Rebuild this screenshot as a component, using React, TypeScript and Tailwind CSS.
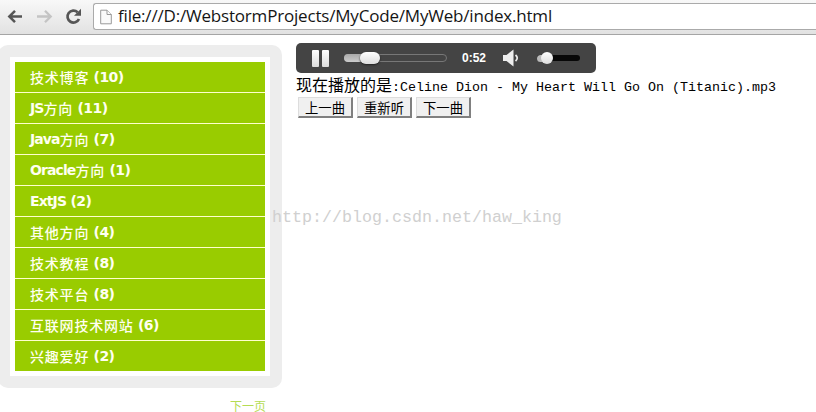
const categories = [
  { cjk: "技术博客", latin: "", count: 10 },
  { cjk: "方向", latin: "JS", count: 11 },
  { cjk: "方向", latin: "Java", count: 7 },
  { cjk: "方向", latin: "Oracle", count: 1 },
  { cjk: "", latin: "ExtJS", count: 2 },
  { cjk: "其他方向", latin: "", count: 4 },
  { cjk: "技术教程", latin: "", count: 8 },
  { cjk: "技术平台", latin: "", count: 8 },
  { cjk: "互联网技术网站", latin: "", count: 6 },
  { cjk: "兴趣爱好", latin: "", count: 2 },
];

function Toolbar() {
  return (
    <header className="flex h-[35px] items-start border-b border-[#a5a5a5] bg-gradient-to-b from-[#f8f8f8] to-[#e2e2e2]">
      <svg className="h-[34px] w-[93px] shrink-0" viewBox="0 0 93 34" fill="none">
        <path d="M22 16.5H10M15 10.8L9.3 16.5L15 22.2" stroke="#555" strokeWidth="2.5" />
        <path d="M37 16.5H50M45 10.8L50.7 16.5L45 22.2" stroke="#c4c4c4" strokeWidth="2.3" />
        <path d="M77.6 12.2A6 6 0 1 0 79 19" stroke="#555" strokeWidth="2.7" />
        <path d="M81 8.8V15.8H74Z" fill="#555" />
      </svg>
      <div className="mt-[3px] flex h-[27px] flex-1 items-center rounded-l-[3px] border border-r-0 border-[#aaa] bg-white">
        <svg className="ml-[6px] h-4 w-3 shrink-0" viewBox="0 0 12 16" fill="#fafafa" stroke="#999">
          <path d="M.7 1.2H7L11.3 5.5V14.8H.7Z" />
          <path d="M7 1.2V5.5H11.3" />
        </svg>
        <span className="ml-[6px] whitespace-nowrap pb-px font-['Open_Sans','Noto_Sans',sans-serif] text-[17px] leading-[24px] tracking-[-0.19px] text-[#151515]">
          file:///D:/WebstormProjects/MyCode/MyWeb/index.html
        </span>
      </div>
    </header>
  );
}

function Sidebar() {
  return (
    <aside className="w-[284px] shrink-0 pt-[10px]">
      <div className="-ml-[2px] mr-[2px] h-[343px] rounded-[10px] bg-[#ededed] px-3 pt-3">
        <ul className="h-[319px] bg-white p-[5px]">
          {categories.map(({ cjk, latin, count }) => (
            <li
              key={latin + cjk}
              className="flex h-[31px] items-center whitespace-pre border-b border-[#ffffcc] bg-[#99cc00] pl-[15px] text-[14px] leading-[30px] text-[#fffff0] last:h-[30px] last:border-b-0"
            >
              <span className="font-['DejaVu_Sans','Liberation_Sans',sans-serif] text-[14px] font-bold tracking-[-0.9px]">{latin}</span>
              <span className="font-['Noto_Sans_CJK_SC',sans-serif] font-medium tracking-[0.8px]">{cjk}</span>
              <span className="font-['DejaVu_Sans','Liberation_Sans',sans-serif] text-[14px] font-bold tracking-[-0.55px]"> ({count})</span>
            </li>
          ))}
        </ul>
      </div>
      <div className="mt-[10px] pr-[18px] text-right font-['Noto_Sans_CJK_SC',sans-serif] text-[12px] leading-[16px] text-[#b5dc55]">
        下一页
      </div>
    </aside>
  );
}

function Player() {
  return (
    <div className="flex h-[30px] w-[300px] items-center rounded-[5px] bg-[#444] pl-4">
      <div className="flex gap-[3px]">
        <i className="h-[17px] w-[7px] rounded-[1px] bg-gradient-to-b from-white to-[#ddd]" />
        <i className="h-[17px] w-[7px] rounded-[1px] bg-gradient-to-b from-white to-[#ddd]" />
      </div>
      <div className="ml-[15px] flex h-[8px] w-[103px] items-center rounded-full border border-[#777]">
        <i className="-ml-px h-[8px] w-[20px] rounded-l-full bg-gradient-to-b from-[#aaa] to-[#ccc]" />
        <i className="-ml-[4px] h-[12px] w-[20px] rounded-full bg-gradient-to-b from-white to-[#ddd] shadow-[0_1px_2px_#222]" />
      </div>
      <span className="ml-[15px] w-[26px] font-['Liberation_Sans',sans-serif] text-[12px] font-bold leading-[30px] text-white">0:52</span>
      <svg className="ml-[15px] h-[18px] w-[17px]" viewBox="0 0 17 18" fill="#eee">
        <path d="M0 6H3.5L10.5.5V17.5L3.5 12H0Z" />
        <path d="M12.5 6Q16 9 12.5 12" fill="none" stroke="#eee" strokeWidth="1.7" />
      </svg>
      <div className="ml-[17px] flex h-[6px] w-[43px] items-center rounded-full bg-[#080808]">
        <i className="h-[7px] w-[9px] shrink-0 rounded-l-full bg-[#bbb]" />
        <i className="-ml-[5px] h-[12px] w-[12px] shrink-0 rounded-full bg-gradient-to-b from-white to-[#ddd]" />
      </div>
    </div>
  );
}

export default function App() {
  return (
    <div className="relative h-[412px] w-[816px] overflow-hidden bg-white">
      <Toolbar />
      <div className="flex">
        <Sidebar />
        <main className="ml-3 pt-2">
          <Player />
          <p className="h-[24px] whitespace-pre font-['Liberation_Mono','Noto_Sans_CJK_SC',monospace] text-[13.33px] leading-[22px] text-black">
            <span className="font-['Noto_Sans_CJK_SC',sans-serif] text-[16px] font-normal">现在播放的是</span>:Celine Dion - My Heart Will Go On (Titanic).mp3
          </p>
          <div className="ml-[2px] flex gap-1">
            {["上一曲", "重新听", "下一曲"].map((label) => (
              <button
                key={label}
                className="h-[21px] w-[55px] border-b-2 border-l border-r-2 border-t border-b-[#808080] border-l-[#ddd] border-r-[#808080] border-t-[#ddd] bg-[#f0f0f0] font-['Noto_Sans_CJK_SC',sans-serif] text-[13.33px] leading-[17px] text-black"
              >
                {label}
              </button>
            ))}
          </div>
        </main>
      </div>
      <div className="absolute left-[272px] top-[206px] whitespace-pre font-['Liberation_Mono',monospace] text-[16.67px] leading-[24px] text-[#d0d0d0]">
        http://blog.csdn.net/haw_king
      </div>
    </div>
  );
}
